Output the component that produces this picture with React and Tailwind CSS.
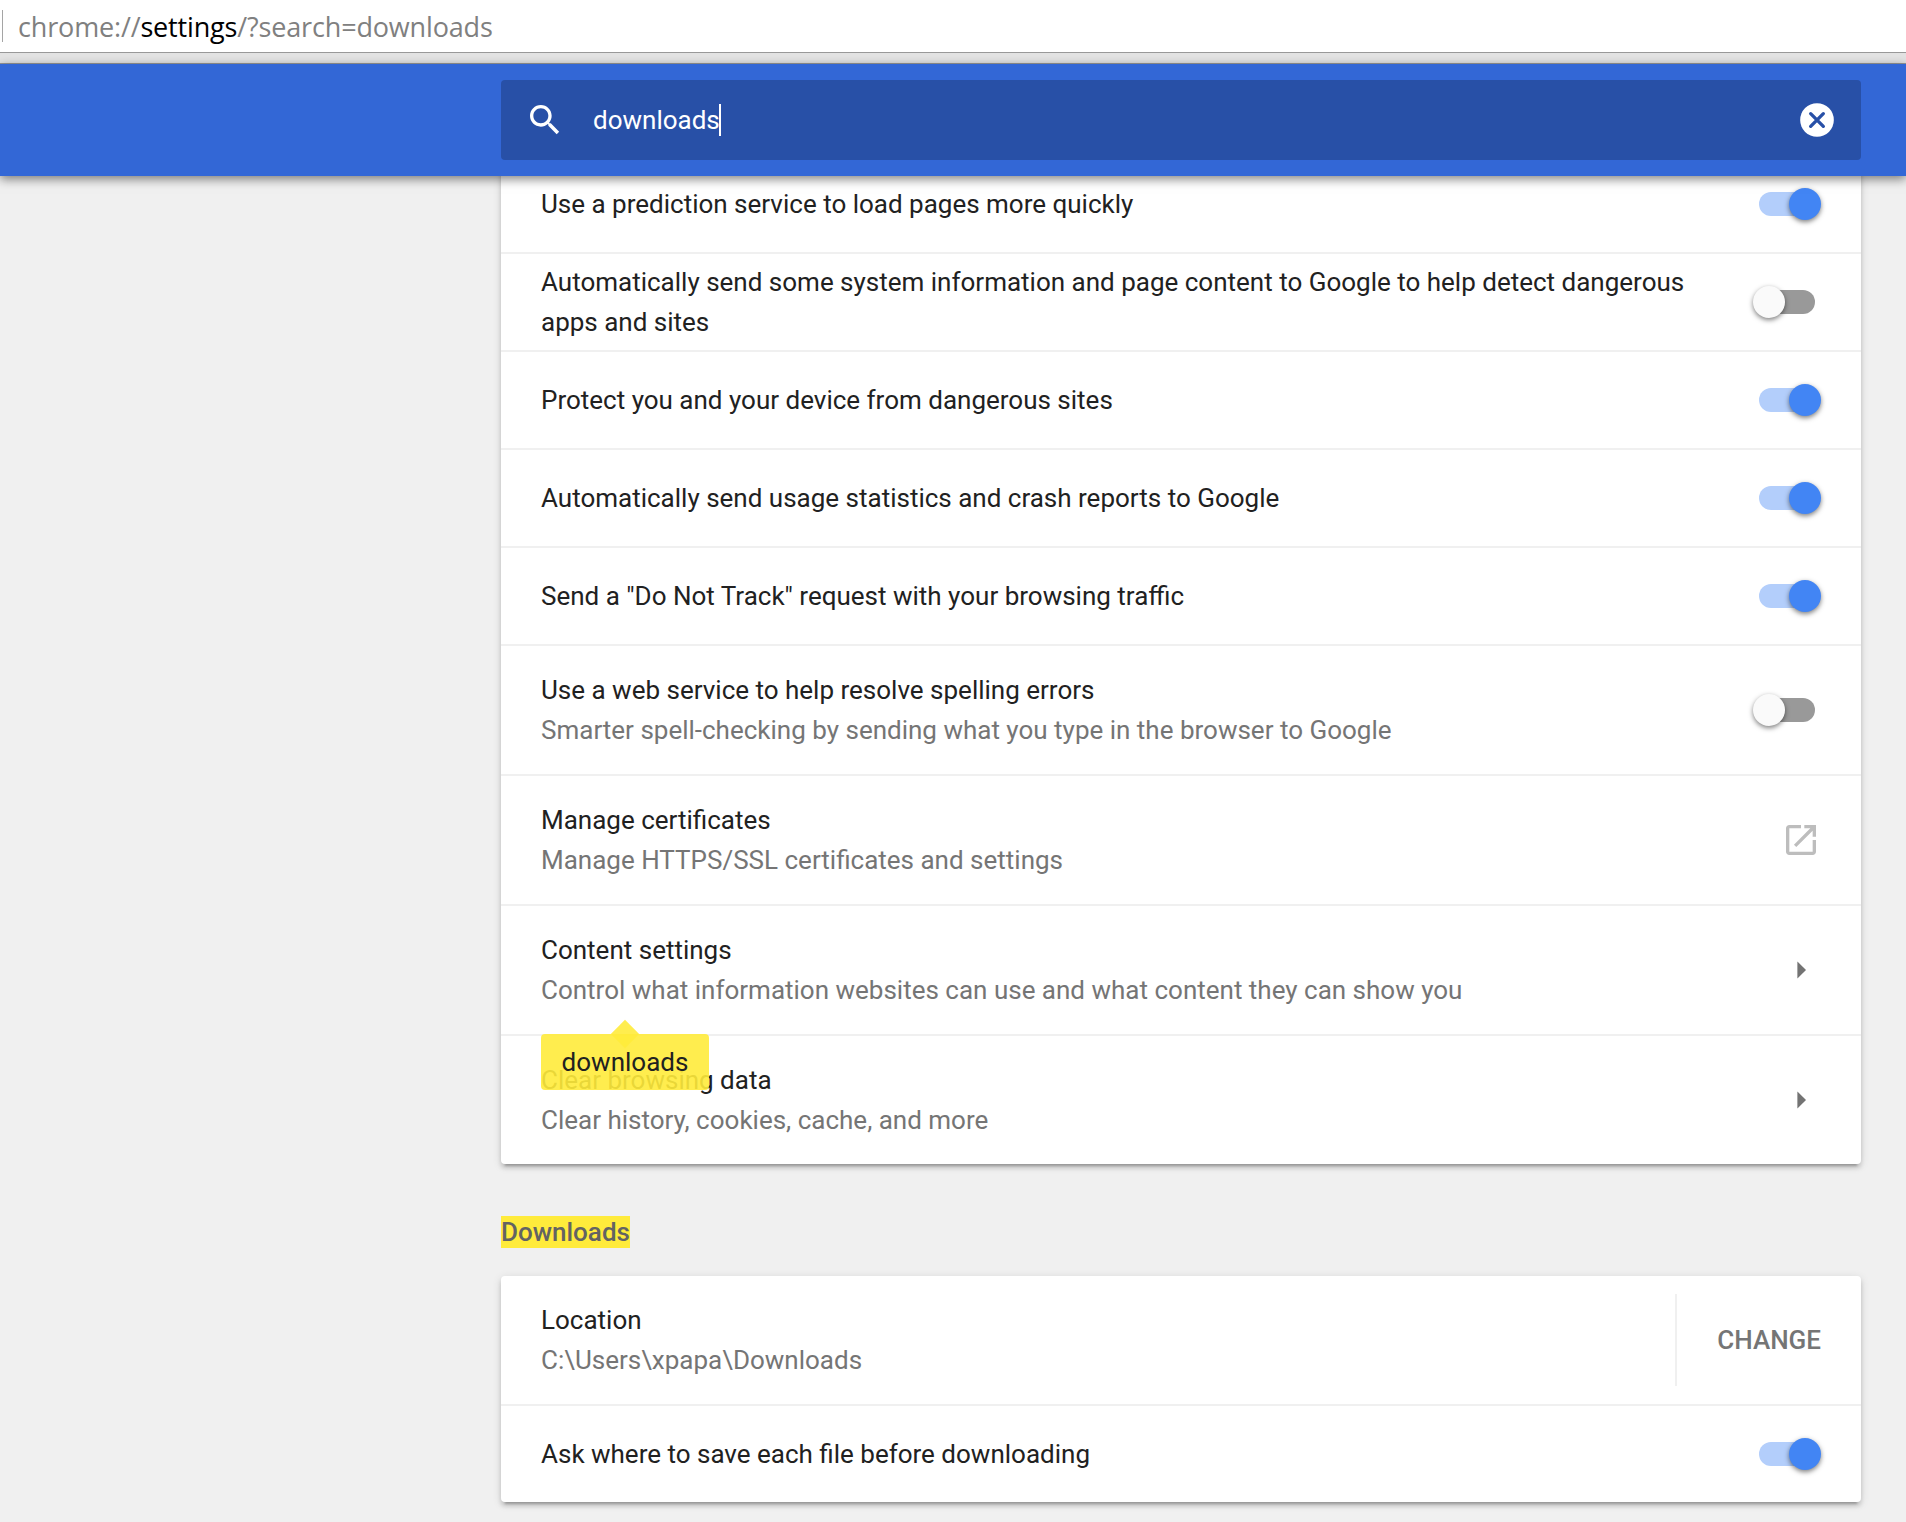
import React from "react";

function Toggle({ on }) {
  return (
    <div
      role="switch"
      aria-checked={on}
      className={`relative mr-1.5 h-6 w-14 shrink-0 rounded-full ${on ? "bg-[#b3cefb]" : "bg-[#999999]"}`}
    >
      <span
        className={`absolute -top-1 size-8 rounded-full shadow-[0_2px_5px_rgba(0,0,0,0.5)] ${on ? "left-[30px] bg-[#4285f4]" : "-left-1.5 bg-[#fafafa]"}`}
      />
    </div>
  );
}

function OpenIcon() {
  return (
    <svg viewBox="0 0 24 24" className="size-10 shrink-0 fill-[#bdbdbd]">
      <path d="M19 19H5V5h7V3H5c-1.11 0-2 .9-2 2v14c0 1.1.89 2 2 2h14c1.1 0 2-.9 2-2v-7h-2v7zM14 3v2h3.59l-9.83 9.83 1.41 1.41L19 6.41V10h2V3h-7z" />
    </svg>
  );
}

function Arrow() {
  return (
    <svg viewBox="0 0 9 18" className="mr-[15px] h-[18px] w-[9px] shrink-0 fill-[#737373]">
      <path d="M0.4 0.4L9 9L0.4 17.6Z" />
    </svg>
  );
}

function Row({ title, sub, tall, first, children }) {
  return (
    <div
      className={`flex items-center justify-between pr-10 pl-10 ${first ? "" : "border-t-2 border-[#f0f0f0]"} ${tall ? (first ? "h-32" : "h-[130px]") : first ? "h-24" : "h-[98px]"}`}
    >
      <div className="max-w-[1150px]">
        <div className="text-[#212121]">{title}</div>
        {sub && <div className="text-[#757575]">{sub}</div>}
      </div>
      {children}
    </div>
  );
}

const card =
  "rounded bg-white shadow-[0_4px_4px_0_rgba(0,0,0,0.14),0_2px_10px_0_rgba(0,0,0,0.12),0_6px_2px_-4px_rgba(0,0,0,0.2)]";

export default function App() {
  return (
    <div className="h-[1522px] w-[1906px] overflow-hidden bg-[#f0f0f0] font-[Roboto,sans-serif] text-[26px] leading-10">
      <div className="flex h-[53px] items-center border-b border-[#999] bg-white pl-0.5">
        <div className="h-8 w-px bg-[#a5a5a5]" />
        <div className="ml-[15px] pt-px font-['Open_Sans',sans-serif] text-[27px] tracking-[-0.16px] text-[#808080]">
          chrome://<span className="text-black">settings</span>/?search=downloads
        </div>
      </div>
      <div className="h-[11px] border-b border-[#999] bg-[#e3e3e3]" />

      <header className="relative z-10 h-28 bg-[#3367d6] pt-4 shadow-[0_3px_10px_rgba(0,0,0,0.5)]">
        <div className="ml-[501px] flex h-20 w-[1360px] items-center rounded bg-[#2850a7] pr-6 pl-6 text-white">
          <svg viewBox="0 0 24 24" className="size-10 fill-white">
            <path d="M15.5 14h-.79l-.28-.27C15.41 12.59 16 11.11 16 9.5 16 5.91 13.09 3 9.5 3S3 5.91 3 9.5 5.91 16 9.5 16c1.61 0 3.09-.59 4.23-1.57l.27.28v.79l5 4.99L20.49 19l-4.99-5zm-6 0C7.01 14 5 11.99 5 9.5S7.01 5 9.5 5 14 7.01 14 9.5 11.99 14 9.5 14z" />
          </svg>
          <span className="ml-7">downloads</span>
          <span className="-ml-px h-8 w-0.5 bg-white" />
          <svg viewBox="0 0 24 24" className="ml-auto size-10">
            <circle cx="12" cy="12" r="10.1" className="fill-white" />
            <path d="M8.2 8.2l7.6 7.6M15.8 8.2l-7.6 7.6" className="stroke-[#2850a7]" strokeWidth="2" strokeLinecap="round" />
          </svg>
        </div>
      </header>

      <main className="-mt-5 ml-[501px] w-[1360px]">
        <section className={card}>
          <Row first title="Use a prediction service to load pages more quickly">
            <Toggle on />
          </Row>
          <Row title="Automatically send some system information and page content to Google to help detect dangerous apps and sites">
            <Toggle on={false} />
          </Row>
          <Row title="Protect you and your device from dangerous sites">
            <Toggle on />
          </Row>
          <Row title="Automatically send usage statistics and crash reports to Google">
            <Toggle on />
          </Row>
          <Row title={'Send a "Do Not Track" request with your browsing traffic'}>
            <Toggle on />
          </Row>
          <Row tall title="Use a web service to help resolve spelling errors" sub="Smarter spell-checking by sending what you type in the browser to Google">
            <Toggle on={false} />
          </Row>
          <Row tall title="Manage certificates" sub="Manage HTTPS/SSL certificates and settings">
            <OpenIcon />
          </Row>
          <Row tall title="Content settings" sub="Control what information websites can use and what content they can show you">
            <Arrow />
          </Row>
          <div className="relative">
            <Row tall title="Clear browsing data" sub="Clear history, cookies, cache, and more">
              <Arrow />
            </Row>
            <div className="absolute top-0 left-10 flex h-14 w-[168px] items-center justify-center rounded bg-[#ffeb3b]/90 text-[#212121]">
              <span className="absolute top-[-10px] left-[74px] size-5 rotate-45 bg-[#ffeb3b]/90" />
              <span className="relative">downloads</span>
            </div>
          </div>
        </section>

        <h2 className="mt-12 flex h-10 items-center font-medium text-[#636363]">
          <span className="h-8 bg-[#ffeb3b] leading-8">Downloads</span>
        </h2>

        <section className={`mt-6 ${card}`}>
          <Row first tall title="Location" sub="C:\Users\xpapa\Downloads">
            <div className="flex h-[92px] items-center border-l-2 border-[#f0f0f0] pl-10 font-medium text-[#757575]">
              CHANGE
            </div>
          </Row>
          <Row title="Ask where to save each file before downloading">
            <Toggle on />
          </Row>
        </section>
      </main>
    </div>
  );
}
